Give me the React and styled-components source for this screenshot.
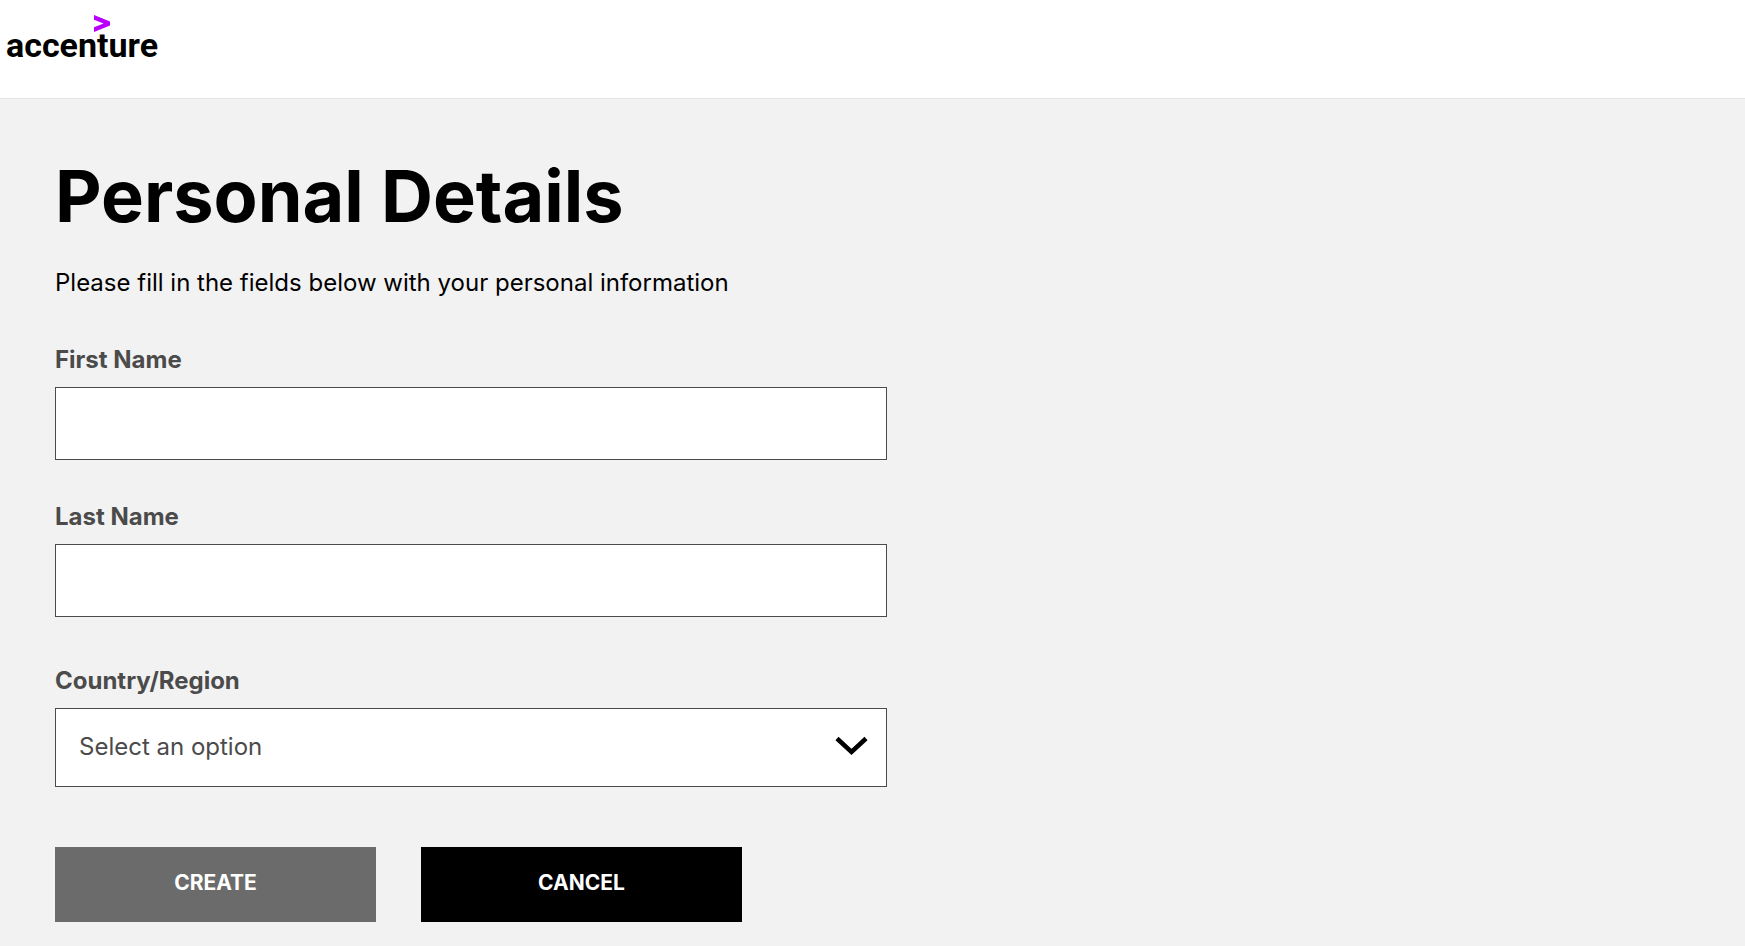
import React from "react";
import styled, { createGlobalStyle } from "styled-components";

const GlobalStyle = createGlobalStyle`
  *, *::before, *::after {
    box-sizing: border-box;
  }
  body {
    margin: 0;
    background-color: #f2f2f2;
    color: #000;
    font-family: Inter, "Open Sans", sans-serif;
    font-size: 24px;
    line-height: 32px;
  }
`;
const StyledHeader = styled.header`
  padding: 15px 6px 37px;
  background-color: #fff;
  border-bottom: 1px solid #e4e4e4;
`;
const StyledLogo = styled.a`
  display: flex;
  flex-direction: column;
  width: fit-content;
  color: #000;
  font-family: Roboto, sans-serif;
  font-size: 34px;
  font-weight: 700;
  line-height: 32px;
  text-decoration: none;
  svg {
    width: 16px;
    height: 17px;
    margin-left: 88px;
  }
  span {
    margin-top: -3px;
  }
`;
const StyledMain = styled.main`
  padding: 55px;
`;
const StyledTitle = styled.h1`
  margin: 0;
  font-size: 72px;
  font-weight: 700;
  line-height: 84px;
`;
const StyledIntro = styled.p`
  margin: 29px 0 45px;
`;
const StyledForm = styled.form`
  display: flex;
  flex-direction: column;
  max-width: 832px;
`;
const StyledField = styled.div`
  display: flex;
  flex-direction: column;
  gap: 11px;
  margin-bottom: ${({ $gap }) => $gap}px;
`;
const StyledLabel = styled.label`
  color: #4b4b4b;
  font-weight: 700;
`;
const StyledInput = styled.input`
  width: 100%;
  height: 73px;
  padding: 0 23px;
  background-color: #fff;
  border: 1px solid #4b4b4b;
  border-radius: 0;
  color: #4b4b4b;
  font: inherit;
`;
const StyledSelectBox = styled.div`
  position: relative;
  svg {
    position: absolute;
    top: 28px;
    right: 19px;
    width: 34px;
    height: 20px;
    pointer-events: none;
  }
`;
const StyledSelect = styled.select`
  display: block;
  width: 100%;
  height: 79px;
  padding: 0 60px 2px 23px;
  appearance: none;
  background-color: #fff;
  border: 1px solid #4b4b4b;
  border-radius: 0;
  color: #4b4b4b;
  font: inherit;
`;
const StyledActions = styled.div`
  display: flex;
  flex-wrap: wrap;
  gap: 45px;
`;
const StyledButton = styled.button`
  flex: 0 1 321px;
  height: 75px;
  padding: 0 24px 4px;
  background-color: ${({ $muted }) => ($muted ? "#6b6b6b" : "#000")};
  border: 0;
  color: #fff;
  font: inherit;
  font-size: 21px;
  font-weight: 700;
  text-transform: uppercase;
  cursor: pointer;
`;

const Logo = () => (
  <StyledLogo href="#">
    <svg viewBox="0 0 16 17" aria-hidden="true">
      <path d="M0 0L16 6.5V10.5L0 17V12.2L9.6 8.5L0 4.8Z" fill="#b900ff" />
    </svg>
    <span>accenture</span>
  </StyledLogo>
);

const TextField = ({ id, label, gap }) => (
  <StyledField $gap={gap}>
    <StyledLabel htmlFor={id}>{label}</StyledLabel>
    <StyledInput id={id} name={id} type="text" />
  </StyledField>
);

const SelectField = ({ id, label, gap }) => (
  <StyledField $gap={gap}>
    <StyledLabel htmlFor={id}>{label}</StyledLabel>
    <StyledSelectBox>
      <StyledSelect id={id} name={id} defaultValue="">
        <option value="">Select an option</option>
      </StyledSelect>
      <svg viewBox="0 0 34 20" aria-hidden="true">
        <path d="M3 2.5L17.5 16L32 2.5" fill="none" stroke="#000" strokeWidth="4.5" />
      </svg>
    </StyledSelectBox>
  </StyledField>
);

export default function App() {
  return (
    <>
      <GlobalStyle />
      <StyledHeader>
        <Logo />
      </StyledHeader>
      <StyledMain>
        <StyledTitle>Personal Details</StyledTitle>
        <StyledIntro>
          Please fill in the fields below with your personal information
        </StyledIntro>
        <StyledForm onSubmit={(e) => e.preventDefault()}>
          <TextField id="firstName" label="First Name" gap={41} />
          <TextField id="lastName" label="Last Name" gap={48} />
          <SelectField id="country" label="Country/Region" gap={60} />
          <StyledActions>
            <StyledButton type="submit" $muted>Create</StyledButton>
            <StyledButton type="button">Cancel</StyledButton>
          </StyledActions>
        </StyledForm>
      </StyledMain>
    </>
  );
}
